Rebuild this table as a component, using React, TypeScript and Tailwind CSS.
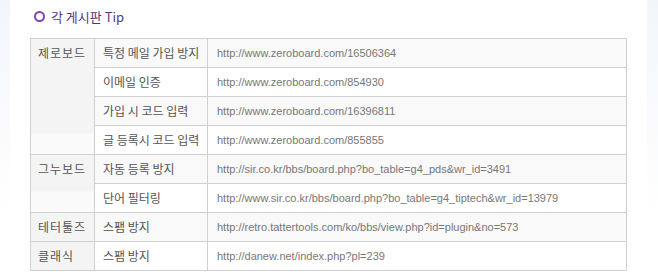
import React from "react";

type Row = { group?: string; span?: number; item: string; url: string };

const rows: Row[] = [
  { group: "제로보드", span: 4, item: "특정 메일 가입 방지", url: "http://www.zeroboard.com/16506364" },
  { item: "이메일 인증", url: "http://www.zeroboard.com/854930" },
  { item: "가입 시 코드 입력", url: "http://www.zeroboard.com/16396811" },
  { item: "글 등록시 코드 입력", url: "http://www.zeroboard.com/855855" },
  { group: "그누보드", span: 2, item: "자동 등록 방지", url: "http://sir.co.kr/bbs/board.php?bo_table=g4_pds&wr_id=3491" },
  { item: "단어 필터링", url: "http://www.sir.co.kr/bbs/board.php?bo_table=g4_tiptech&wr_id=13979" },
  { group: "테터툴즈", span: 1, item: "스팸 방지", url: "http://retro.tattertools.com/ko/bbs/view.php?id=plugin&no=573" },
  { group: "클래식", span: 1, item: "스팸 방지", url: "http://danew.net/index.php?pl=239" },
];

const ko = { fontFamily: '"Noto Sans CJK KR", "Noto Sans", sans-serif' };
const en = { fontFamily: '"Liberation Sans", Arial, sans-serif' };

export default function App() {
  return (
    <div className="relative w-[658px] h-[280px] bg-white overflow-hidden">
      <div className="absolute left-0 top-0 w-[10px] h-[220px] bg-[linear-gradient(to_bottom,#f2f6fb,#ffffff)]" />
      <div className="absolute right-0 top-0 w-[11px] h-[220px] bg-[linear-gradient(to_bottom,#f2f6fb,#ffffff)]" />
      <div className="relative pl-[30px] pt-[6px]">
        <div className="flex items-center h-[20px] pl-[4px] gap-[6px]">
          <span className="block w-[11px] h-[11px] rounded-full border-[2.5px] border-[#7e44b4]" />
          <span className="text-[13px] text-[#553685] leading-none" style={ko}>
            각 게시판 Tip
          </span>
        </div>
        <table className="mt-[12px] w-[597px] border-collapse table-fixed">
          <colgroup>
            <col className="w-[64px]" />
            <col className="w-[113px]" />
            <col />
          </colgroup>
          <tbody>
            {rows.map((r, i) => (
              <tr key={i} className={`h-[29px] ${i % 2 === 0 ? "bg-[#f9f9f9]" : "bg-white"}`}>
                {r.group && (
                  <td
                    rowSpan={r.span}
                    className={`border border-[#d0d0d0] align-top pl-[7px] pt-[5px] text-[12px] text-[#555] leading-[18px] tracking-[1px] ${
                      (r.span ?? 1) > 1
                        ? "bg-[linear-gradient(to_bottom,#f4f4f4_calc(100%_-_21px),#fafafa_calc(100%_-_21px))]"
                        : "bg-[#f4f4f4]"
                    }`}
                    style={ko}
                  >
                    {r.group}
                  </td>
                )}
                <td className="border border-[#d0d0d0] pl-[8px] text-[12px] text-[#555] leading-[18px] whitespace-nowrap" style={ko}>
                  {r.item}
                </td>
                <td className="border border-[#d0d0d0] pl-[9px] text-[11px] text-[#777] whitespace-nowrap" style={en}>
                  {r.url}
                </td>
              </tr>
            ))}
          </tbody>
        </table>
      </div>
    </div>
  );
}
